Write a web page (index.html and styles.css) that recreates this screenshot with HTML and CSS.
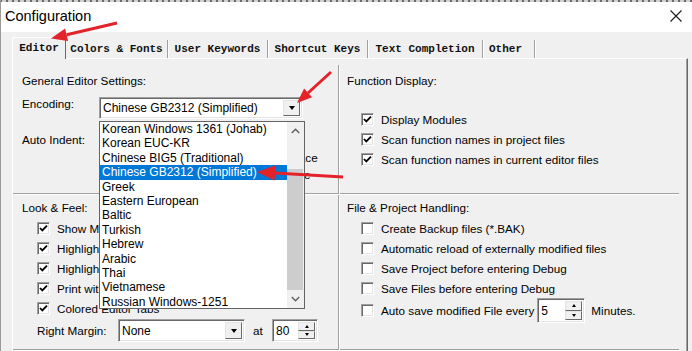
FILE: index.html
```html
<!DOCTYPE html>
<html lang="en">
<head>
    <meta charset="UTF-8">
    <meta name="viewport" content="width=device-width, initial-scale=1.0">
    <title>Configuration</title>
    <link rel="stylesheet" href="styles.css">
</head>
<body>
<div class="window">
    <div class="edge"></div>
    <div class="titlebar">
        <span class="title">Configuration</span>
        <svg class="close" width="12" height="12" viewBox="0 0 12 12">
            <path d="M0.5 0.5 L11.5 11.5 M11.5 0.5 L0.5 11.5" stroke="#1a1a1a" stroke-width="1.1" fill="none"/>
        </svg>
    </div>

    <div class="tabs">
        <div class="tab active">Editor</div>
        <div class="tab t-colors">Colors &amp; Fonts</div>
        <div class="tab t-user">User Keywords</div>
        <div class="tab t-short">Shortcut Keys</div>
        <div class="tab t-text">Text Completion</div>
        <div class="tab t-other">Other</div>
    </div>

    <div class="panel">
        <div class="grid">
            <!-- General Editor Settings -->
            <div class="group general">
                <div class="caption">General Editor Settings:</div>
                <div class="field enc">
                    <span class="lbl">Encoding:</span>
                    <div class="combo c-enc">
                        <span class="val">Chinese GB2312 (Simplified)</span>
                        <span class="drop"><i></i></span>
                    </div>
                </div>
                <div class="field indent">
                    <span class="lbl">Auto Indent:</span>
                    <div class="combo c-indent">
                        <span class="val">Smart</span>
                        <span class="drop"><i></i></span>
                    </div>
                    <div class="side-checks">
                        <label class="chk small"><span class="box"></span>Virtual Spaces</label>
                        <label class="chk small"><span class="box"></span>View White Space</label>
                        <label class="chk small"><span class="box"></span>View End of Line</label>
                    </div>
                </div>
            </div>

            <!-- Function Display -->
            <div class="group func">
                <div class="caption">Function Display:</div>
                <div class="checks">
                    <label class="chk"><span class="box"><svg viewBox="0 0 11 11"><path d="M2 5 L4.3 7.4 L9 2.6"/></svg></span>Display Modules</label>
                    <label class="chk"><span class="box"><svg viewBox="0 0 11 11"><path d="M2 5 L4.3 7.4 L9 2.6"/></svg></span>Scan function names in project files</label>
                    <label class="chk"><span class="box"><svg viewBox="0 0 11 11"><path d="M2 5 L4.3 7.4 L9 2.6"/></svg></span>Scan function names in current editor files</label>
                </div>
            </div>

            <!-- Look & Feel -->
            <div class="group look">
                <div class="caption">Look &amp; Feel:</div>
                <div class="checks">
                    <label class="chk"><span class="box"><svg viewBox="0 0 11 11"><path d="M2 5 L4.3 7.4 L9 2.6"/></svg></span>Show Message Dialogs</label>
                    <label class="chk"><span class="box"><svg viewBox="0 0 11 11"><path d="M2 5 L4.3 7.4 L9 2.6"/></svg></span>Highlight Current Line</label>
                    <label class="chk"><span class="box"><svg viewBox="0 0 11 11"><path d="M2 5 L4.3 7.4 L9 2.6"/></svg></span>Highlight matching Braces</label>
                    <label class="chk"><span class="box"><svg viewBox="0 0 11 11"><path d="M2 5 L4.3 7.4 L9 2.6"/></svg></span>Print with syntax coloring</label>
                    <label class="chk"><span class="box"><svg viewBox="0 0 11 11"><path d="M2 5 L4.3 7.4 L9 2.6"/></svg></span>Colored Editor Tabs</label>
                    <div class="margin-row">
                        <span class="lbl-margin">Right Margin:</span>
                        <div class="combo c-margin">
                            <span class="val">None</span>
                            <span class="drop"><i></i></span>
                        </div>
                        <span class="at">at</span>
                        <div class="spin s-margin">
                            <span class="val">80</span>
                            <span class="spin-btns"><span class="up"><i></i></span><span class="down"><i></i></span></span>
                        </div>
                    </div>
                </div>
            </div>

            <!-- File & Project Handling -->
            <div class="group file">
                <div class="caption">File &amp; Project Handling:</div>
                <div class="checks">
                    <label class="chk"><span class="box"></span>Create Backup files (*.BAK)</label>
                    <label class="chk"><span class="box"></span>Automatic reload of externally modified files</label>
                    <label class="chk"><span class="box"></span>Save Project before entering Debug</label>
                    <label class="chk"><span class="box"></span>Save Files before entering Debug</label>
                    <label class="chk tall"><span class="box"></span>Auto save modified File every
                        <span class="spin s-save">
                            <span class="val">5</span>
                            <span class="spin-btns"><span class="up"><i></i></span><span class="down"><i></i></span></span>
                        </span>
                        <span class="minutes">Minutes.</span>
                    </label>
                </div>
            </div>
        </div>
    </div>

    <!-- open encoding list -->
    <div class="droplist">
        <ul class="items">
            <li>Korean Windows 1361 (Johab)</li>
            <li>Korean EUC-KR</li>
            <li>Chinese BIG5 (Traditional)</li>
            <li class="sel">Chinese GB2312 (Simplified)</li>
            <li>Greek</li>
            <li>Eastern European</li>
            <li>Baltic</li>
            <li>Turkish</li>
            <li>Hebrew</li>
            <li>Arabic</li>
            <li>Thai</li>
            <li>Vietnamese</li>
            <li>Russian Windows-1251</li>
        </ul>
        <div class="scrollbar">
            <span class="sb-btn"><svg width="9" height="6" viewBox="0 0 9 6"><path d="M0.8 5 L4.5 1.2 L8.2 5"/></svg></span>
            <span class="sb-track"></span>
            <span class="sb-thumb"></span>
            <span class="sb-btn down"><svg width="9" height="6" viewBox="0 0 9 6"><path d="M0.8 1 L4.5 4.8 L8.2 1"/></svg></span>
        </div>
    </div>

    <!-- red annotation arrows -->
    <svg class="arrows" width="692" height="351" viewBox="0 0 692 351">
        <g fill="#e3222a" stroke="#e3222a">
            <line x1="117" y1="23" x2="66.6" y2="34.8" stroke-width="3"/>
            <polygon points="51,38.5 68.1,41.1 65.1,28.5" stroke="none"/>
            <line x1="331" y1="72" x2="308" y2="93" stroke-width="3"/>
            <polygon points="297,103 312.1,97.3 304.1,88.5" stroke="none"/>
            <line x1="343" y1="177" x2="275" y2="173" stroke-width="3"/>
            <polygon points="257,172 275.4,165.5 274.6,180.5" stroke="none"/>
        </g>
    </svg>
</div>
</body>
</html>
```

FILE: styles.css
```css
body {
    margin: 0;
    background: #f0f0f0;
    font-family: "Liberation Sans", Arial, sans-serif;
    font-size: 11.7px;
    color: #000;
    overflow: hidden;
}
.window {
    position: relative;
    width: 692px;
    height: 351px;
    overflow: hidden;
}
.window::after {
    content: "";
    position: absolute;
    left: 0;
    top: 0;
    bottom: 0;
    width: 1px;
    background: #9a9a9a;
}
.edge {
    height: 2px;
    background: repeating-linear-gradient(90deg, #6a6a6a 0 2px, #cfcfcf 2px 6px);
}
.titlebar {
    height: 30px;
    background: #fff;
    display: flex;
    align-items: center;
    justify-content: space-between;
    padding: 0 10px 0 5px;
}
.title {
    font-size: 14.5px;
    line-height: 28px;
    margin-top: -2px;
}
.close {
    margin-top: -2px;
}

/* tabs */
.tabs {
    display: flex;
    align-items: flex-end;
    height: 21px;
    margin: 5px 0 0 12px;
}
.tab {
    height: 18px;
    line-height: 18px;
    border-right: 1px solid #a0a0a0;
    box-shadow: 1px 0 0 #fff;
    text-align: center;
    font-family: "Liberation Mono", "Courier New", monospace;
    font-size: 11px;
    font-weight: bold;
    color: #111;
    box-sizing: content-box;
}
.tab.active {
    width: 52px;
    height: 21px;
    line-height: 21px;
    border-top: 1px solid #fff;
    border-left: 1px solid #fff;
    border-right: 1px solid #696969;
    box-shadow: none;
    margin-bottom: -1px;
    background: #f0f0f0;
    position: relative;
    z-index: 1;
}
.t-colors { width: 101px; }
.t-user { width: 99px; }
.t-short { width: 99px; }
.t-text { width: 114px; }
.t-other {
    width: 45px;
    text-align: left;
    padding-left: 6px;
}

/* page frame */
.panel {
    margin-left: 12px;
    width: 676px;
    height: 300px;
    box-sizing: border-box;
    border-top: 1px solid #fff;
    border-left: 1px solid #fff;
    border-right: 1px solid #696969;
    box-shadow: inset -1px 0 0 #a0a0a0;
}
.grid {
    display: grid;
    grid-template-columns: 326px 339px;
    grid-template-rows: 129px 155px;
    column-gap: 1px;
    row-gap: 1px;
    padding-top: 6px;
}
.group {
    box-sizing: border-box;
    border-bottom: 1px solid #a0a0a0;
    box-shadow: 0 1px 0 #fff;
}
.general, .look {
    border-right: 1px solid #a0a0a0;
    box-shadow: 1px 1px 0 #fff;
    padding-left: 9px;
}
.func, .file {
    padding-left: 7px;
}
.general, .func {
    padding-top: 9px;
}
.look, .file {
    padding-top: 6px;
}
.caption {
    line-height: 14px;
}

/* general settings */
.field {
    display: flex;
    align-items: flex-start;
}
.enc {
    margin-top: 9px;
}
.indent {
    margin-top: 14px;
}
.lbl {
    width: 77px;
    line-height: 14px;
}
.c-enc {
    width: 204px;
    height: 22px;
}
.c-indent {
    width: 96px;
    height: 21px;
}
.side-checks {
    margin: -2px 0 0 8px;
}
.chk.small {
    height: 17.5px;
}

/* combos */
.combo, .spin {
    display: flex;
    align-items: center;
    box-sizing: border-box;
    background: #fff;
    border: 1px solid;
    border-color: #a0a0a0 #fff #fff #a0a0a0;
    box-shadow: inset 1px 1px 0 #696969, inset -1px -1px 0 #e3e3e3;
    font-size: 12px;
}
.combo .val, .spin .val {
    flex: 1;
    padding-left: 3px;
    white-space: nowrap;
    overflow: hidden;
}
.drop {
    width: 17px;
    height: calc(100% - 4px);
    margin-right: 2px;
    box-sizing: border-box;
    background: #f0f0f0;
    border: 1px solid;
    border-color: #e3e3e3 #696969 #696969 #e3e3e3;
    display: flex;
    align-items: center;
    justify-content: center;
}
.drop i {
    width: 0;
    height: 0;
    border-left: 3.5px solid transparent;
    border-right: 3.5px solid transparent;
    border-top: 4px solid #000;
}
.spin-btns {
    width: 17px;
    height: calc(100% - 4px);
    margin-right: 2px;
    display: flex;
    flex-direction: column;
}
.spin-btns span {
    flex: 1;
    box-sizing: border-box;
    background: #f0f0f0;
    border: 1px solid;
    border-color: #e3e3e3 #696969 #696969 #e3e3e3;
    display: flex;
    align-items: center;
    justify-content: center;
}
.spin-btns .up i {
    border-left: 2.5px solid transparent;
    border-right: 2.5px solid transparent;
    border-bottom: 3px solid #000;
}
.spin-btns .down i {
    border-left: 2.5px solid transparent;
    border-right: 2.5px solid transparent;
    border-top: 3px solid #000;
}

/* checkboxes */
.checks {
    display: flex;
    flex-direction: column;
}
.func .checks {
    margin-top: 21.5px;
    padding-left: 14px;
}
.file .checks {
    margin-top: 3px;
    padding-left: 14px;
}
.look .checks {
    margin-top: 3px;
    padding-left: 15px;
}
.chk {
    display: flex;
    align-items: center;
    height: 20px;
    white-space: nowrap;
}
.chk.tall {
    height: 25px;
}
.box {
    width: 13px;
    height: 13px;
    flex: none;
    margin-right: 7px;
    box-sizing: border-box;
    background: #fff;
    border: 1px solid;
    border-color: #a0a0a0 #fff #fff #a0a0a0;
    box-shadow: inset 1px 1px 0 #696969, inset -1px -1px 0 #e3e3e3;
    display: flex;
}
.box svg {
    width: 11px;
    height: 11px;
}
.box path {
    fill: none;
    stroke: #000;
    stroke-width: 1.8;
}
.s-save {
    width: 48px;
    height: 25px;
    margin-left: 3px;
}
.minutes {
    margin-left: 6px;
}
.margin-row {
    display: flex;
    align-items: center;
    height: 23px;
    margin-top: 1px;
}
.lbl-margin {
    width: 81px;
}
.c-margin {
    width: 127px;
    height: 23px;
}
.at {
    width: 19px;
    margin-left: 8px;
}
.s-margin {
    width: 46px;
    height: 23px;
}

/* opened drop-down list */
.droplist {
    position: absolute;
    left: 99px;
    top: 121px;
    width: 206px;
    height: 188px;
    box-sizing: border-box;
    border: 1px solid #646464;
    background: #fff;
    display: flex;
    z-index: 5;
}
.items {
    list-style: none;
    margin: 0;
    padding: 0;
    flex: 1;
    font-size: 12px;
}
.items li {
    height: 14.4px;
    line-height: 14.4px;
    padding-left: 2px;
    white-space: nowrap;
}
.items li.sel {
    background: #0078d7;
    color: #fff;
}
.scrollbar {
    width: 17px;
    background: #f0f0f0;
    display: flex;
    flex-direction: column;
}
.sb-btn {
    height: 17px;
    display: flex;
    align-items: center;
    justify-content: center;
}
.sb-btn.down {
    height: 18px;
}
.sb-btn path {
    fill: none;
    stroke: #606060;
    stroke-width: 1.4;
}
.sb-track {
    height: 30px;
}
.sb-thumb {
    flex: 1;
    margin: 0 1px 0 0;
    background: #cdcdcd;
}

.arrows {
    position: absolute;
    left: 0;
    top: 0;
    z-index: 10;
    pointer-events: none;
}
```
